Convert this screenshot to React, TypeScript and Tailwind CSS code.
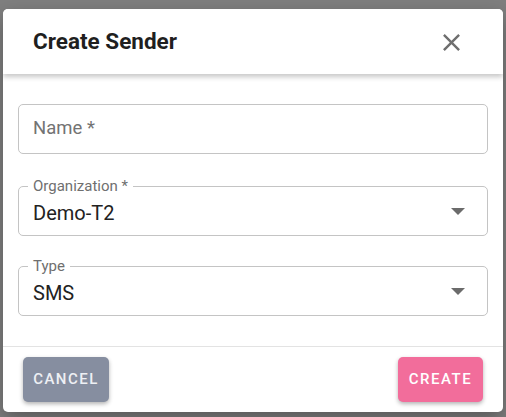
import React from "react";

function CloseIcon() {
  return (
    <svg width="29" height="29" viewBox="0 0 24 24" fill="#6f6f6f">
      <path d="M19 6.41 17.59 5 12 10.59 6.41 5 5 6.41 10.59 12 5 17.59 6.41 19 12 13.41 17.59 19 19 17.59 13.41 12z" />
    </svg>
  );
}

function Arrow() {
  return (
    <svg width="14" height="7" viewBox="0 0 14 7" fill="#6b6b6b">
      <path d="M0 0 L14 0 L7 7 Z" />
    </svg>
  );
}

function SelectField({ label, value, mt }: { label: string; value: string; mt: string }) {
  return (
    <div className={`relative h-[50px] rounded-[5px] border border-[#c4c4c4] flex items-center ${mt}`}>
      <span className="absolute left-[9px] top-[-10px] bg-white px-[5px] text-[15px] leading-[18px] text-[#6f6f6f]">
        {label}
      </span>
      <span className="pl-[14px] pt-[4px] text-[20px] text-[#222222]">{value}</span>
      <span className="absolute right-[22px] top-[21px] flex">
        <Arrow />
      </span>
    </div>
  );
}

export default function App() {
  return (
    <div
      className="w-[506px] h-[417px] bg-[#7f7f7f] pt-[9px] px-[3px]"
      style={{ fontFamily: "Roboto, 'Noto Sans', sans-serif" }}
    >
      <div className="w-[500px] h-[403px] bg-white rounded-[5px] flex flex-col overflow-hidden shadow-[0_8px_20px_rgba(0,0,0,0.3)]">
        <div className="relative z-10 h-[65px] flex items-center justify-between pl-[30px] pr-[37px] bg-white shadow-[0_3px_5px_rgba(0,0,0,0.22)]">
          <span className="text-[22.5px] font-bold text-[#1f1f1f] pt-[1px]">Create Sender</span>
          <span className="flex pt-[1px]">
            <CloseIcon />
          </span>
        </div>
        <div className="px-[15px] pt-[30px] pb-[30px] border-b border-[#e3e3e3]">
          <div className="h-[50px] rounded-[5px] border border-[#c4c4c4] flex items-center pl-[14px]">
            <span className="text-[18.5px] text-[#737373]">Name *</span>
          </div>
          <SelectField label="Organization *" value="Demo-T2" mt="mt-[32px]" />
          <SelectField label="Type" value="SMS" mt="mt-[30px]" />
        </div>
        <div className="flex-1 flex items-center justify-between px-[20px]">
          <button className="h-[45px] w-[86px] rounded-[5px] bg-[#868ea0] text-[#eef0f4] text-[15px] font-medium tracking-[1.5px] shadow-[0_2px_4px_rgba(0,0,0,0.3)]">
            CANCEL
          </button>
          <button className="h-[45px] w-[85px] rounded-[5px] bg-[#f26d9b] text-white text-[15px] font-medium tracking-[1.5px] shadow-[0_2px_4px_rgba(0,0,0,0.3)]">
            CREATE
          </button>
        </div>
      </div>
    </div>
  );
}
